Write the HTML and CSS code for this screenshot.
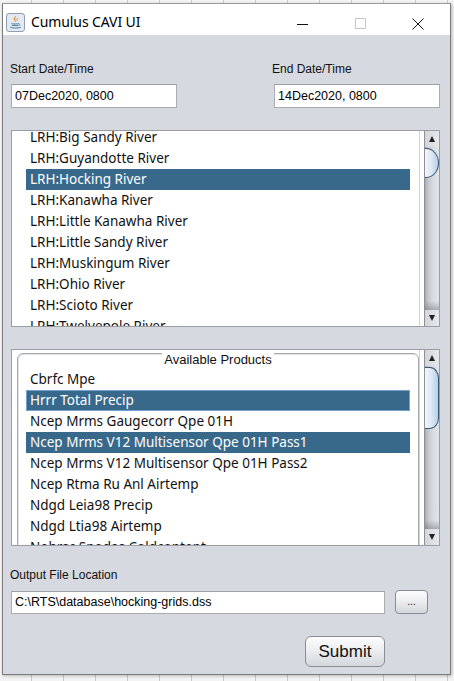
FILE: index.html
```html
<!DOCTYPE html>
<html>
<head>
<meta charset="utf-8">
<title>Cumulus CAVI UI</title>
<link rel="stylesheet" href="styles.css">
</head>
<body>
<div class="window">
  <div class="titlebar">
    <svg class="app-icon" width="19" height="19" viewBox="0 0 19 19">
      <rect x="0.5" y="0.5" width="18" height="18" rx="2.5" fill="#e3e9f0" stroke="#8e9db0"/>
      <path d="M9.6 2.6c1.1 1.6-1.6 2.6-.6 4.4.5.8 1.1 1.3.9 2.2-.4-.9-1.3-1.4-1.8-2.3-1.1-1.9 1.6-2.7 1.5-4.3z" fill="#e76f00"/>
      <path d="M11.9 5.2c-1.3.8-1.1 1.7-.5 2.5" stroke="#e76f00" stroke-width="0.9" fill="none"/>
      <path d="M5.4 10.6c1.2.6 6 .6 7.2 0M5.8 12.3c1.1.5 5.3.5 6.4 0" stroke="#4f7ea1" stroke-width="1" fill="none"/>
      <path d="M12.7 10.9c1.6-.3 1.5 1.7-.4 2" stroke="#4f7ea1" stroke-width="0.9" fill="none"/>
      <path d="M4.2 14.3c2 1 8.6 1 10.6 0" stroke="#4f7ea1" stroke-width="1" fill="none"/>
    </svg>
    <span class="title">Cumulus CAVI UI</span>
    <div class="controls">
      <span class="ctrl"><span class="min-glyph"></span></span>
      <span class="ctrl"><span class="max-glyph"></span></span>
      <span class="ctrl">
        <svg width="12" height="12" viewBox="0 0 12 12"><path d="M0.5 0.5L11.5 11.5M11.5 0.5L0.5 11.5" stroke="#111" stroke-width="1"/></svg>
      </span>
    </div>
  </div>

  <div class="content">
    <div class="dates">
      <div class="field-group">
        <div class="label">Start Date/Time</div>
        <div class="textfield date">07Dec2020, 0800</div>
      </div>
      <div class="field-group">
        <div class="label">End Date/Time</div>
        <div class="textfield date">14Dec2020, 0800</div>
      </div>
    </div>

    <div class="listbox">
      <div class="viewport">
        <div class="rows basin-rows">
          <div class="row">LRH:Big Sandy River</div>
          <div class="row">LRH:Guyandotte River</div>
          <div class="row selected">LRH:Hocking River</div>
          <div class="row">LRH:Kanawha River</div>
          <div class="row">LRH:Little Kanawha River</div>
          <div class="row">LRH:Little Sandy River</div>
          <div class="row">LRH:Muskingum River</div>
          <div class="row">LRH:Ohio River</div>
          <div class="row">LRH:Scioto River</div>
          <div class="row">LRH:Twelvepole River</div>
        </div>
      </div>
      <div class="scrollbar">
        <div class="arrow"><span class="tri-up"></span></div>
        <div class="track"><div class="thumb thumb-small"></div></div>
        <div class="arrow"><span class="tri-down"></span></div>
      </div>
    </div>

    <div class="listbox products">
      <div class="viewport">
        <div class="titled">
          <div class="titled-caption">Available Products</div>
          <div class="rows product-rows">
            <div class="row">Cbrfc Mpe</div>
            <div class="row selected focused">Hrrr Total Precip</div>
            <div class="row">Ncep Mrms Gaugecorr Qpe 01H</div>
            <div class="row selected">Ncep Mrms V12 Multisensor Qpe 01H Pass1</div>
            <div class="row">Ncep Mrms V12 Multisensor Qpe 01H Pass2</div>
            <div class="row">Ncep Rtma Ru Anl Airtemp</div>
            <div class="row">Ndgd Leia98 Precip</div>
            <div class="row">Ndgd Ltia98 Airtemp</div>
            <div class="row">Nohrsc Snodas Coldcontent</div>
          </div>
        </div>
      </div>
      <div class="scrollbar">
        <div class="arrow"><span class="tri-up"></span></div>
        <div class="track"><div class="thumb thumb-large"></div></div>
        <div class="arrow"><span class="tri-down"></span></div>
      </div>
    </div>

    <div class="label output-label">Output File Location</div>
    <div class="file-row">
      <div class="textfield file">C:\RTS\database\hocking-grids.dss</div>
      <button class="btn browse">...</button>
    </div>
    <div class="submit-row">
      <button class="btn submit">Submit</button>
    </div>
  </div>
</div>
</body>
</html>
```

FILE: styles.css
```css
html, body {
  margin: 0;
  padding: 0;
}

body {
  width: 454px;
  height: 681px;
  overflow: hidden;
  background-color: #f3f3f3;
  background-image: repeating-linear-gradient(to right, transparent 0, transparent 31px, #c9c9c9 31px, #c9c9c9 32px);
  font-family: "Liberation Sans", Arial, sans-serif;
}

.window {
  margin: 3px 0 0 2px;
  width: 449px;
  height: 672px;
  box-sizing: border-box;
  border: 1px solid #7a7a7a;
  border-top-color: #9a9a9a;
  display: flex;
  flex-direction: column;
  box-shadow: 1px 1px 3px rgba(0, 0, 0, 0.25);
}

/* ---------- title bar ---------- */
.titlebar {
  height: 31px;
  flex: none;
  background: #ffffff;
  display: flex;
  align-items: center;
  padding-left: 3px;
}

.app-icon {
  flex: none;
  margin-top: 5px;
}

.title {
  flex: 1;
  margin-left: 6px;
  margin-top: 3px;
  font-family: "Noto Sans", "Open Sans", sans-serif;
  font-size: 14px;
  color: #000;
  letter-spacing: -0.1px;
}

.controls {
  display: flex;
  margin-right: 3px;
  height: 100%;
}

.ctrl {
  width: 58px;
  height: 100%;
  display: flex;
  align-items: center;
  justify-content: center;
  padding-top: 8px;
  box-sizing: border-box;
}

.min-glyph {
  width: 11px;
  height: 1px;
  background: #111;
  margin-top: 1px;
}

.max-glyph {
  width: 11px;
  height: 11px;
  box-sizing: border-box;
  border: 1px solid #c6c6c6;
}

/* ---------- content ---------- */
.content {
  flex: 1;
  background: #d6d9df;
  padding: 27px 10px 0 8px;
  display: flex;
  flex-direction: column;
}

.label {
  font-size: 12px;
  line-height: 14px;
  color: #111;
  margin-left: -1px;
  white-space: nowrap;
}

.dates {
  display: flex;
  justify-content: space-between;
}

.field-group {
  width: 166px;
  display: flex;
  flex-direction: column;
}

.field-group + .field-group .label {
  margin-left: -2px;
}

.textfield {
  box-sizing: border-box;
  background: #ffffff;
  border: 1px solid #a9acb1;
  border-top-color: #9c9fa4;
  padding-left: 3px;
  font-size: 12.5px;
  color: #000;
  display: flex;
  align-items: center;
  white-space: nowrap;
}

.textfield.date {
  height: 24px;
  margin-top: 8px;
}

/* ---------- lists ---------- */
.listbox {
  margin-top: 22px;
  height: 197px;
  box-sizing: border-box;
  border: 1px solid #9a9da2;
  background: #ffffff;
  display: flex;
}

.viewport {
  width: 408px;
  flex: none;
  box-sizing: border-box;
  border-right: 1px solid #d2d3d6;
  margin-right: 4px;
  overflow: hidden;
}

.rows {
  font-family: "Noto Sans", "DejaVu Sans", sans-serif;
  font-size: 13.5px;
  color: #111;
}

.basin-rows {
  margin: -4px 9px 0 14px;
}

.row {
  height: 21px;
  line-height: 21px;
  padding-left: 4px;
  white-space: nowrap;
  box-sizing: border-box;
}

.row.selected {
  background: #39698a;
  color: #ffffff;
}

.row.focused {
  border: 1px solid #73a2d0;
  line-height: 19px;
  padding-left: 3px;
}

.titled {
  margin: 3px 0 0 5px;
  height: 260px;
  box-sizing: border-box;
  border: 1px solid #a6a8ac;
  border-radius: 6px 6px 0 0;
  box-shadow: inset 1px 1px 0 #e2e3e6;
}

.titled-caption {
  width: max-content;
  margin: -2px auto 0;
  padding: 0 2px;
  background: #ffffff;
  font-size: 13px;
  line-height: 15px;
  color: #111;
}

.product-rows {
  margin: 2px 8px 0 8px;
}

/* ---------- scrollbars ---------- */
.scrollbar {
  width: 15px;
  flex: none;
  box-sizing: border-box;
  border-left: 1px solid #8d9095;
  display: flex;
  flex-direction: column;
  background: linear-gradient(to right, #a9acb2 0, #c6c9cf 25%, #d8dbe0 60%, #e2e4e8 100%);
}

.arrow {
  height: 16px;
  flex: none;
  display: flex;
  align-items: center;
  justify-content: center;
  background: linear-gradient(to right, #d2d5da, #e6e8eb);
}

.tri-up {
  width: 0;
  height: 0;
  border-left: 3px solid transparent;
  border-right: 3px solid transparent;
  border-bottom: 6px solid #222;
}

.tri-down {
  width: 0;
  height: 0;
  border-left: 3px solid transparent;
  border-right: 3px solid transparent;
  border-top: 6px solid #222;
}

.track {
  flex: 1;
  display: flex;
  flex-direction: column;
  background: linear-gradient(to bottom, transparent calc(100% - 9px), rgba(70, 72, 80, 0.35) 100%);
}

.thumb {
  margin-top: 1px;
  width: 14px;
  box-sizing: border-box;
  border: 1px solid #3a5671;
  border-left: none;
  background: linear-gradient(to right, #f1f6fb 0, #dce8f4 50%, #b5cfe7 100%);
}

.thumb-small {
  height: 30px;
  border-radius: 0 13px 13px 0 / 0 15px 15px 0;
}

.thumb-large {
  height: 62px;
  border-radius: 0 9px 9px 0 / 0 11px 11px 0;
}

/* ---------- bottom ---------- */
.output-label {
  margin-top: 22px;
}

.file-row {
  margin-top: 8px;
  height: 24px;
  display: flex;
  align-items: center;
  gap: 10px;
}

.textfield.file {
  width: 374px;
  height: 23px;
}

.btn {
  box-sizing: border-box;
  border: 1px solid #8a8d93;
  background: linear-gradient(to bottom, #fdfdfd 0, #eceef1 45%, #d3d6db 100%);
  font-family: "Liberation Sans", Arial, sans-serif;
  color: #111;
  padding: 0;
  margin: 0;
}

.browse {
  width: 33px;
  height: 24px;
  border-radius: 4px;
  font-size: 10px;
  line-height: 20px;
}

.submit-row {
  margin-top: 22px;
  width: 374px;
  display: flex;
  justify-content: flex-end;
}

.submit {
  width: 80px;
  height: 31px;
  border-radius: 6px;
  font-size: 17px;
}
```
